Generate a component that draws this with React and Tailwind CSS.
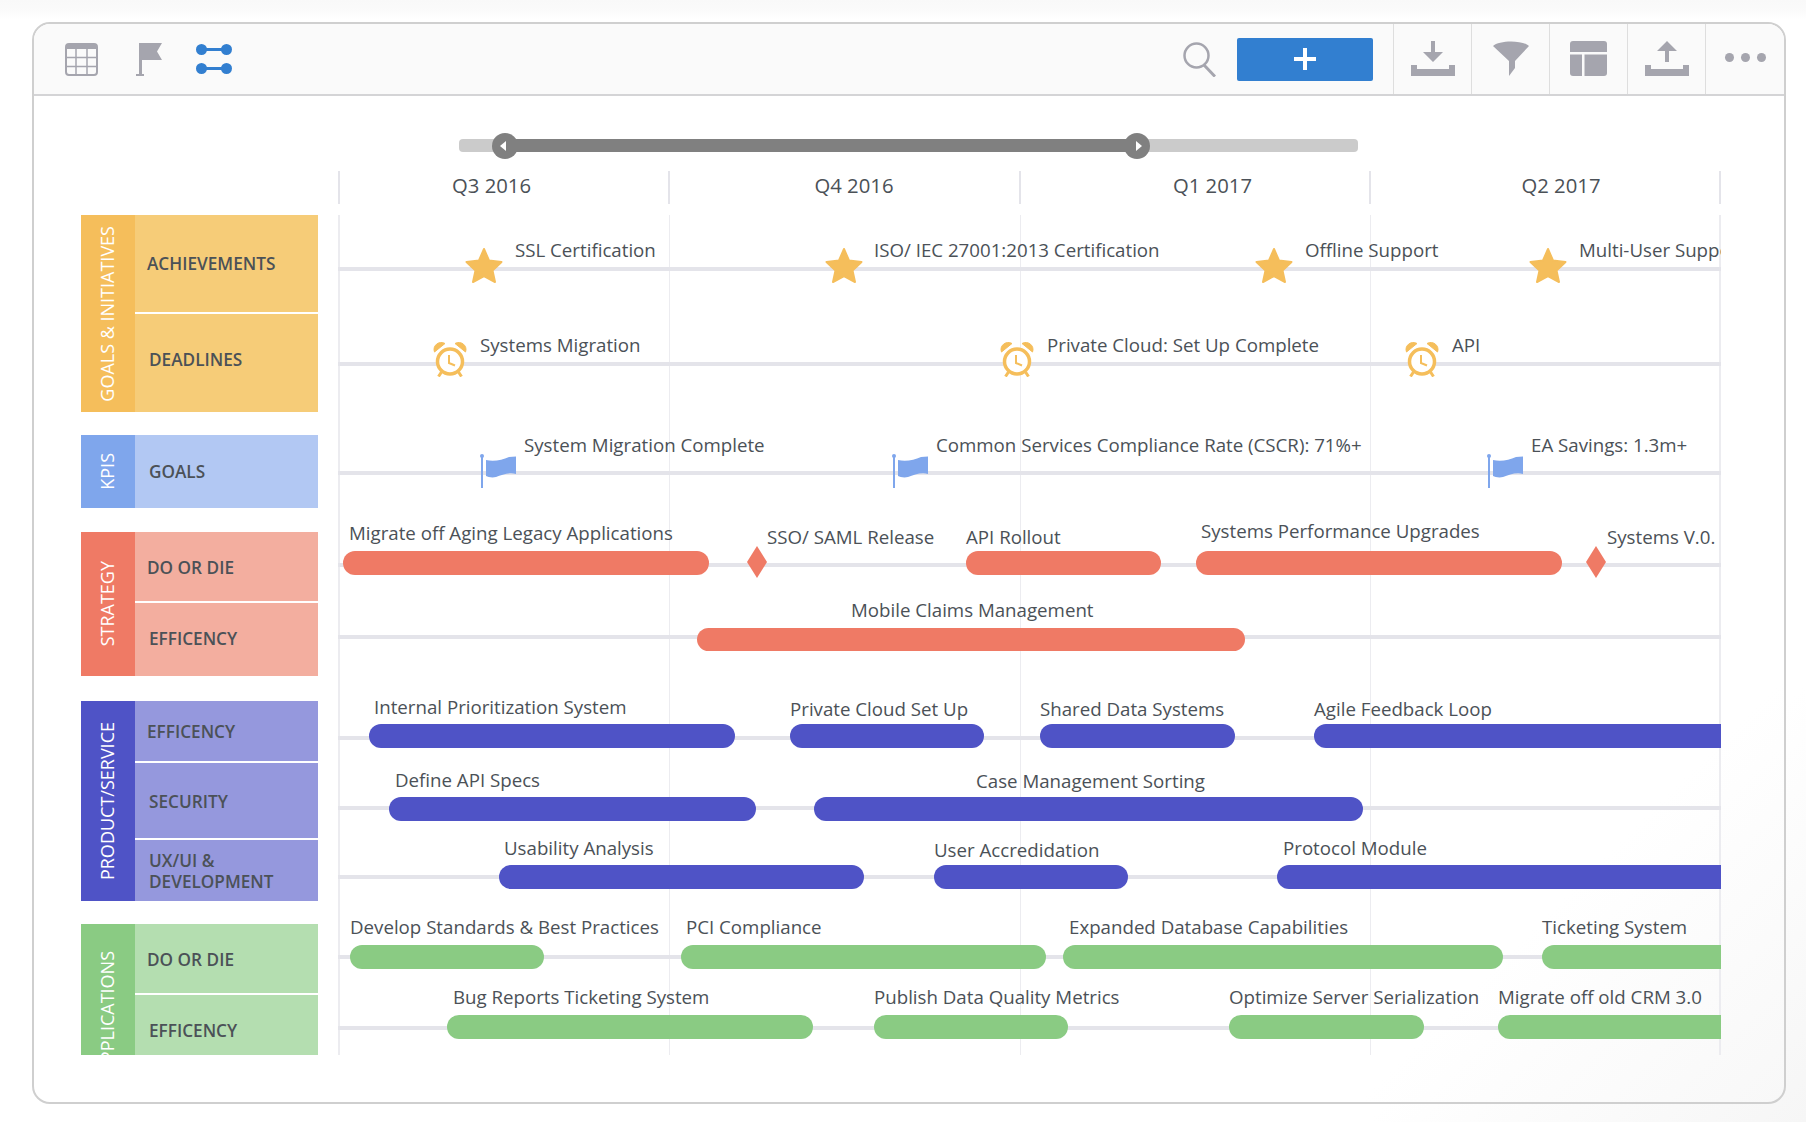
const GRAY = '#a5a5ae'
const LEFT = 338

const groups = [
  { name: 'GOALS & INITIATIVES', band: 'bg-[#f5be5b]', cell: 'bg-[#f6cc78]', rows: [
    { text: 'ACHIEVEMENTS', h: 97, pad: 'pl-3', extra: '' },
    { text: 'DEADLINES', h: 98, pad: 'pl-3.5', extra: 'pb-2' },
  ] },
  { name: 'KPIS', band: 'bg-[#7fa6ec]', cell: 'bg-[#b2c8f3]', rows: [
    { text: 'GOALS', h: 73, pad: 'pl-3.5', extra: '' },
  ] },
  { name: 'STRATEGY', band: 'bg-[#ef7a65]', cell: 'bg-[#f3ae9f]', rows: [
    { text: 'DO OR DIE', h: 69, pad: 'pl-3', extra: 'pt-[2px]' },
    { text: 'EFFICENCY', h: 73, pad: 'pl-3.5', extra: 'pb-[2px]' },
  ] },
  { name: 'PRODUCT/SERVICE', band: 'bg-[#4f53c6]', cell: 'bg-[#9598dd]', rows: [
    { text: 'EFFICENCY', h: 60, pad: 'pl-3', extra: '' },
    { text: 'SECURITY', h: 75, pad: 'pl-3.5', extra: 'pt-[2px]' },
    { text: 'UX/UI & DEVELOPMENT', h: 61, pad: 'pl-3.5', extra: '' },
  ] },
  { name: 'APPLICATIONS', band: 'bg-[#8acb83]', cell: 'bg-[#b4deb0]', rows: [
    { text: 'DO OR DIE', h: 69, pad: 'pl-3', extra: 'pt-[2px]' },
    { text: 'EFFICENCY', h: 105, pad: 'pl-3.5', extra: 'pb-[35px]' },
  ] },
]

const quarters = [
  { label: 'Q3 2016', w: 'w-[331px]', pad: 'pl-[112px]' },
  { label: 'Q4 2016', w: 'w-[351px]', pad: 'pl-[144px]' },
  { label: 'Q1 2017', w: 'w-[351px]', pad: 'pl-[152px]' },
  { label: 'Q2 2017', w: 'w-[350px]', pad: 'pl-[150px]' },
]

const RED = 'bg-[#ef7a65]'
const BLUE = 'bg-[#4f53c6]'
const GREEN = 'bg-[#8acb83]'

// y values are page coordinates, turned into row offsets when drawn
const rows = [
  { line: 268, marks: [['star', 484, 265], ['star', 844, 265], ['star', 1274, 265], ['star', 1548, 265]], labels: [
    ['SSL Certification', 515, 250], ['ISO/ IEC 27001:2013 Certification', 874, 250], ['Offline Support', 1305, 250], ['Multi-User Support', 1579, 250],
  ] },
  { line: 363, marks: [['alarm', 450, 359], ['alarm', 1017, 359], ['alarm', 1422, 359]], labels: [
    ['Systems Migration', 480, 345], ['Private Cloud: Set Up Complete', 1047, 345], ['API', 1452, 345],
  ] },
  { line: 472, marks: [['flag', 498, 471], ['flag', 910, 471], ['flag', 1505, 471]], labels: [
    ['System Migration Complete', 524, 445], ['Common Services Compliance Rate (CSCR): 71%+', 936, 445], ['EA Savings: 1.3m+', 1531, 445],
  ] },
  { line: 564, barTop: 551, barH: 24, color: RED, bars: [[343, 709], [966, 1161], [1196, 1562]], marks: [['diamond', 757, 562], ['diamond', 1596, 562]], labels: [
    ['Migrate off Aging Legacy Applications', 349, 533], ['SSO/ SAML Release', 767, 537], ['API Rollout', 966, 537], ['Systems Performance Upgrades', 1201, 531], ['Systems V.0.', 1607, 537],
  ] },
  { line: 636, barTop: 628, barH: 23, color: RED, bars: [[697, 1245]], labels: [['Mobile Claims Management', 851, 610]] },
  { line: 737, barTop: 724, barH: 24, color: BLUE, bars: [[369, 735], [790, 984], [1040, 1235], [1314, 1800]], labels: [
    ['Internal Prioritization System', 374, 707], ['Private Cloud Set Up', 790, 709], ['Shared Data Systems', 1040, 709], ['Agile Feedback Loop', 1314, 709],
  ] },
  { line: 807, barTop: 797, barH: 24, color: BLUE, bars: [[389, 756], [814, 1363]], labels: [['Define API Specs', 395, 780], ['Case Management Sorting', 976, 781]] },
  { line: 876, barTop: 865, barH: 24, color: BLUE, bars: [[499, 864], [934, 1128], [1277, 1800]], labels: [
    ['Usability Analysis', 504, 848], ['User Accredidation', 934, 850], ['Protocol Module', 1283, 848],
  ] },
  { line: 956, barTop: 945, barH: 24, color: GREEN, bars: [[350, 544], [681, 1046], [1063, 1503], [1542, 1800]], labels: [
    ['Develop Standards & Best Practices', 350, 927], ['PCI Compliance', 686, 927], ['Expanded Database Capabilities', 1069, 927], ['Ticketing System', 1542, 927],
  ] },
  { line: 1027, barTop: 1015, barH: 24, color: GREEN, bars: [[447, 813], [874, 1068], [1229, 1424], [1498, 1800]], labels: [
    ['Bug Reports Ticketing System', 453, 997], ['Publish Data Quality Metrics', 874, 997], ['Optimize Server Serialization', 1229, 997], ['Migrate off old CRM 3.0', 1498, 997],
  ] },
]

function TableIcon() {
  return (
    <svg width="33" height="33" viewBox="0 0 33 33" fill="none">
      <rect x="1" y="1" width="31" height="31" rx="3" stroke={GRAY} strokeWidth="2" />
      <path d="M1 4a3 3 0 0 1 3-3h25a3 3 0 0 1 3 3v2H1z" fill={GRAY} />
      <path d="M1 14.500h31M1 23.500h31M11 6v26M22 6v26" stroke={GRAY} strokeWidth="1.500" />
    </svg>
  )
}

function FlagIcon() {
  return (
    <svg width="26" height="33" viewBox="0 0 26 33">
      <path d="M3 0h23l-5 8.500 5 8.500H6v14H3z" fill={GRAY} />
      <path d="M0 31h8v2H0z" fill={GRAY} />
    </svg>
  )
}

function DumbbellIcon() {
  return (
    <svg width="36" height="30" viewBox="0 0 36 30" fill="#327fd0">
      <circle cx="5.500" cy="5.500" r="5.500" />
      <circle cx="30.500" cy="5.500" r="5.500" />
      <rect x="5" y="4" width="26" height="3" />
      <circle cx="5.500" cy="24.500" r="5.500" />
      <circle cx="30.500" cy="24.500" r="5.500" />
      <rect x="5" y="23" width="26" height="3" />
    </svg>
  )
}

function SearchIcon() {
  return (
    <svg width="33" height="35" viewBox="0 0 33 35" fill="none" stroke={GRAY} strokeWidth="2.500">
      <ellipse cx="13.500" cy="13.500" rx="12" ry="12" />
      <path d="M21 23l11 11.500" strokeWidth="3" />
    </svg>
  )
}

function DownloadIcon() {
  return (
    <svg width="44" height="35" viewBox="0 0 44 35" fill={GRAY}>
      <path d="M20 0h4v11h8L22 21 12 11h8z" />
      <path d="M0 24h6v4h32v-4h6v11H0z" />
    </svg>
  )
}

function UploadIcon() {
  return (
    <svg width="44" height="35" viewBox="0 0 44 35" fill={GRAY}>
      <path d="M22 0l10 10h-8v11h-4V10h-8z" />
      <path d="M0 24h6v4h32v-4h6v11H0z" />
    </svg>
  )
}

function FunnelIcon() {
  return (
    <svg width="36" height="35" viewBox="0 0 36 35" fill={GRAY}>
      <path d="M0 5C6-1 30-1 36 5L22 20v7l-6 8V20z" />
    </svg>
  )
}

function LayoutIcon() {
  return (
    <svg width="37" height="35" viewBox="0 0 37 35" fill={GRAY}>
      <path d="M3 0h31a3 3 0 0 1 3 3v8H0V3a3 3 0 0 1 3-3z" />
      <path d="M0 13.500h12V35H3a3 3 0 0 1-3-3z" />
      <path d="M14.500 13.500H37V32a3 3 0 0 1-3 3H14.500z" />
    </svg>
  )
}

function Star() {
  return (
    <svg width="38" height="36" viewBox="0 0 38 36" fill="#f5be5b" stroke="#f5be5b" strokeWidth="2" strokeLinejoin="round">
      <path d="M19 2l5 11.500 12.500 1.500-9 8.500 2.500 11.500-11-6-11 6 2.500-11.500-9-8.500L14 13.500z" />
    </svg>
  )
}

function Alarm() {
  return (
    <svg width="34" height="36" viewBox="0 0 34 36" fill="none" stroke="#f5be5b">
      <circle cx="17" cy="20.500" r="12.500" strokeWidth="3.500" fill="white" />
      <path d="M1.500 11C-1 5 6-1 12 2.500zM32.500 11c2.500-6-4.500-12-10.500-8.500z" fill="#f5be5b" strokeWidth="1" />
      <path d="M16 14v8l6 2.500" strokeWidth="2" />
      <path d="M8.500 31l-3 4.500M25.500 31l3 4.500" strokeWidth="3" />
    </svg>
  )
}

function Flag() {
  return (
    <svg width="36" height="34" viewBox="0 0 36 34" fill="#7fa6ec">
      <circle cx="2" cy="2" r="2" />
      <rect x="1" y="1" width="2" height="33" />
      <path d="M6 6C14 8 22 6 29 3L36 2.500V20C29 18 22 21 16 23 12 24 8 23 6 22z" />
    </svg>
  )
}

function Diamond() {
  return (
    <svg width="20" height="32" viewBox="0 0 20 32" fill="#ef7a65">
      <path d="M10 0l10 16-10 16L0 16z" />
    </svg>
  )
}

const markIcons = { star: Star, alarm: Alarm, flag: Flag, diamond: Diamond }

function Toolbar() {
  return (
    <div className="flex h-[72px] shrink-0 items-center border-b-2 border-[#d4d4d6] bg-[#fafafa] pl-[31px]">
      <TableIcon />
      <div className="ml-[38px]"><FlagIcon /></div>
      <div className="ml-[34px]"><DumbbellIcon /></div>
      <div className="ml-auto"><SearchIcon /></div>
      <button className="ml-[21px] mr-[20px] flex h-[43px] w-[136px] items-center justify-center rounded-[2px] bg-[#327fd0]">
        <svg width="22" height="22" viewBox="0 0 22 22" fill="white"><path d="M9 0h4v9h9v4h-9v9H9v-9H0V9h9z" /></svg>
      </button>
      {[DownloadIcon, FunnelIcon, LayoutIcon, UploadIcon].map((Icon, i) => (
        <div key={i} className="flex h-full w-[78px] items-center justify-center border-l border-[#dedede] pb-[2px]">
          <Icon />
        </div>
      ))}
      <div className="flex h-full w-[79px] items-center justify-center gap-[7px] border-l border-[#dedede] pb-[3px]">
        <span className="h-[9px] w-[9px] rounded-full bg-[#a5a5ae]" />
        <span className="h-[9px] w-[9px] rounded-full bg-[#a5a5ae]" />
        <span className="h-[9px] w-[9px] rounded-full bg-[#a5a5ae]" />
      </div>
    </div>
  )
}

function Slider() {
  return (
    <div className="relative ml-[425px] mt-[43px] h-[13px] w-[899px] shrink-0 rounded-[4px] bg-[#cbcbcb]">
      <div className="absolute inset-y-0 left-[46px] w-[632px] bg-[#808080]" />
      <div className="absolute left-[33px] top-[-6px] flex h-[26px] w-[26px] items-center justify-center rounded-full bg-[#808080]">
        <span className="mr-1 h-0 w-0 border-y-[5px] border-r-[6px] border-y-transparent border-r-white" />
      </div>
      <div className="absolute left-[665px] top-[-6px] flex h-[26px] w-[26px] items-center justify-center rounded-full bg-[#808080]">
        <span className="ml-1 h-0 w-0 border-y-[5px] border-l-[6px] border-y-transparent border-l-white" />
      </div>
    </div>
  )
}

function QuarterHeader() {
  return (
    <div className="ml-[304px] mt-[19px] flex h-[33px] w-[1383px] shrink-0 border-r-2 border-[#e4e4ea]">
      {quarters.map((q) => (
        <div key={q.label} className={`flex items-center border-l-2 border-[#e4e4ea] pb-1 text-[20.3px] text-[#4b5157] ${q.w} ${q.pad}`}>
          {q.label}
        </div>
      ))}
    </div>
  )
}

function CategoryGroup({ group }) {
  return (
    <div className="flex shrink-0">
      <div className={`flex w-[54px] shrink-0 items-center justify-center pr-[2px] ${group.band}`}>
        <span className="rotate-180 text-[18px] whitespace-nowrap text-white [writing-mode:vertical-rl]">{group.name}</span>
      </div>
      <div className="flex w-[183px] flex-col gap-[2px]">
        {group.rows.map((row) => (
          <div key={row.text} className={`flex items-center ${group.cell} ${row.pad} ${row.extra}`} style={{ height: row.h }}>
            <span className="text-[17.2px] leading-[21px] font-semibold text-[#4b5157]">{row.text}</span>
          </div>
        ))}
      </div>
    </div>
  )
}

function TimelineRow({ row, top }) {
  return (
    <div className="relative shrink-0" style={{ height: row.line - top }}>
      <div className="absolute inset-x-0 bottom-[-3px] h-1 bg-[#e4e4ea]" />
      {(row.bars || []).map(([from, to]) => (
        <div
          key={from}
          className={`absolute rounded-full ${row.color}`}
          style={{ left: from - LEFT, width: to - from, top: row.barTop - top, height: row.barH }}
        />
      ))}
      {(row.marks || []).map(([type, x, y]) => {
        const Icon = markIcons[type]
        return (
          <div key={x} className="absolute flex -translate-x-1/2 -translate-y-1/2" style={{ left: x - LEFT, top: y - top }}>
            <Icon />
          </div>
        )
      })}
      {row.labels.map(([text, x, y]) => (
        <span
          key={text}
          className="absolute -translate-y-1/2 text-[18.7px] leading-none whitespace-nowrap text-[#4b5157]"
          style={{ left: x - LEFT, top: y - top }}
        >
          {text}
        </span>
      ))}
    </div>
  )
}

function Timeline() {
  return (
    <div className="relative flex h-[840px] w-[1383px] flex-col overflow-hidden">
      <div className="absolute inset-y-0 left-0 w-[2px] bg-[#ececf0]" />
      <div className="absolute inset-y-0 left-[331px] w-px bg-[#ececf0]" />
      <div className="absolute inset-y-0 left-[682px] w-px bg-[#ececf0]" />
      <div className="absolute inset-y-0 left-[1032px] w-px bg-[#ececf0]" />
      <div className="absolute inset-y-0 right-0 w-[2px] bg-[#ececf0]" />
      {rows.map((row, i) => (
        <TimelineRow key={row.line} row={row} top={i === 0 ? 215 : rows[i - 1].line} />
      ))}
    </div>
  )
}

export default function App() {
  return (
    <div
      className="h-[1122px] w-[1806px] overflow-hidden bg-[linear-gradient(to_bottom,#f9f9f9_0,#fbfbfb_12px,#ffffff_20px,rgba(255,255,255,0)_20px),linear-gradient(135deg,#ffffff_85%,#f6f6f6_100%)] pl-[32px] pt-[22px] text-[#4b5157]"
      style={{ fontFamily: '"Open Sans", sans-serif' }}
    >
      <div className="flex h-[1082px] w-[1754px] flex-col overflow-hidden rounded-[18px] border-2 border-[#cfcfcf] bg-[linear-gradient(135deg,#ffffff_85%,#f8f8f8_100%)]">
        <Toolbar />
        <Slider />
        <QuarterHeader />
        <div className="ml-[47px] mt-[11px] flex gap-[20px]">
          <div className="flex h-[840px] w-[237px] shrink-0 flex-col overflow-hidden">
            <CategoryGroup group={groups[0]} />
            <div className="mt-[23px]"><CategoryGroup group={groups[1]} /></div>
            <div className="mt-[24px]"><CategoryGroup group={groups[2]} /></div>
            <div className="mt-[25px]"><CategoryGroup group={groups[3]} /></div>
            <div className="mt-[23px]"><CategoryGroup group={groups[4]} /></div>
          </div>
          <Timeline />
        </div>
      </div>
    </div>
  )
}
